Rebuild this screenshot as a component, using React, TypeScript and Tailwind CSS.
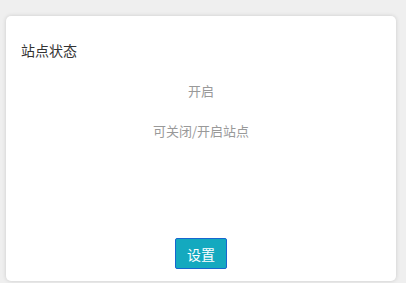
export default function App() {
  return (
    <div
      className="w-[406px] h-[283px] bg-[#efefef] pt-[16px] pl-[6px] overflow-hidden"
      style={{ fontFamily: '"Microsoft YaHei", "Noto Sans CJK SC", sans-serif' }}
    >
      <div className="w-[390px] h-[265px] bg-white rounded-[5px] shadow-[0_0_4px_rgba(0,0,0,0.15)] flex flex-col pt-[24px]">
        <h2 className="px-[15px] text-[14px] leading-[20px] text-[#333] font-normal">站点状态</h2>
        <div className="mt-[21px] text-center text-[13px] leading-[20px] text-[#999]">开启</div>
        <div className="mt-[20px] text-center text-[13px] leading-[20px] text-[#999]">可关闭/开启站点</div>
        <div className="mt-auto mb-[12px] flex justify-center">
          <button className="w-[52px] h-[31px] bg-[#14a9bf] border border-[#1766cf] rounded-[2px] text-white text-[14px] leading-none">
            设置
          </button>
        </div>
      </div>
    </div>
  );
}
